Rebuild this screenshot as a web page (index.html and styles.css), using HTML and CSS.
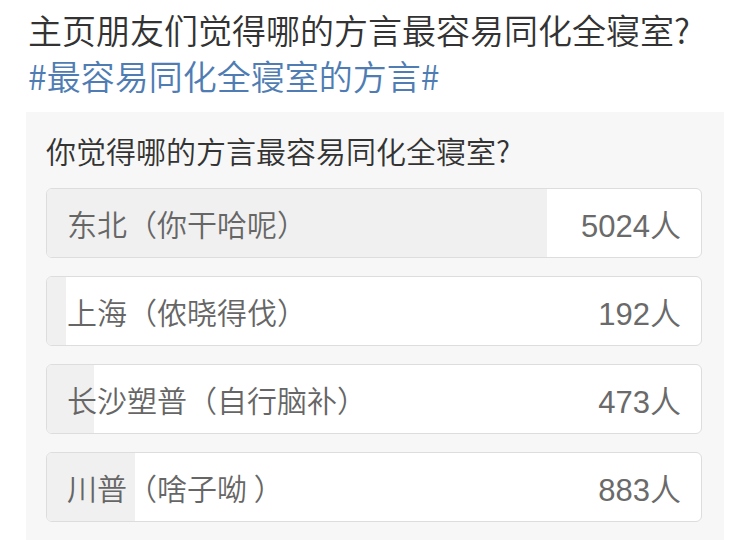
FILE: index.html
```html
<!DOCTYPE html>
<html lang="zh-CN">
<head>
  <meta charset="UTF-8" />
  <meta name="viewport" content="width=device-width, initial-scale=1.0" />
  <title>投票</title>
  <link rel="stylesheet" href="styles.css">
</head>
<body>
  <div class="post">
    <p class="post-text">主页朋友们觉得哪的方言最容易同化全寝室?<br><a class="topic" href="#">#最容易同化全寝室的方言#</a></p>

    <div class="vote-card">
      <div class="question">你觉得哪的方言最容易同化全寝室?</div>

      <div class="option">
        <div class="fill" style="width: 76.4%"></div>
        <span class="label">东北（你干哈呢）</span>
        <span class="count">5024人</span>
      </div>
      <div class="option">
        <div class="fill" style="width: 2.9%"></div>
        <span class="label">上海（侬晓得伐）</span>
        <span class="count">192人</span>
      </div>
      <div class="option">
        <div class="fill" style="width: 7.2%"></div>
        <span class="label">长沙塑普（自行脑补）</span>
        <span class="count">473人</span>
      </div>
      <div class="option">
        <div class="fill" style="width: 13.4%"></div>
        <span class="label">川普（啥子呦 ）</span>
        <span class="count">883人</span>
      </div>
    </div>
  </div>
</body>
</html>
```

FILE: styles.css
```css
body {
  margin: 0;
  background: #fff;
  font-family: "Noto Sans CJK SC", "Noto Sans", sans-serif;
  font-weight: 350;
}
.post {
  padding: 7px 6px 0 26px;
}
.post-text {
  margin: 0 0 13px 2px;
  font-size: 34px;
  line-height: 46px;
  color: #333;
}
.topic {
  color: #4f7db3;
  text-decoration: none;
}
.vote-card {
  background: #f7f7f7;
  padding: 18px 22px 18px 20px;
}
.question {
  font-size: 30px;
  line-height: 40px;
  color: #333;
  margin-bottom: 18px;
}
.option {
  position: relative;
  display: flex;
  justify-content: space-between;
  align-items: center;
  height: 68px;
  padding: 0 20px;
  margin-bottom: 18px;
  background: #fff;
  border: 1px solid #ddd;
  border-radius: 6px;
  overflow: hidden;
}
.option:last-child {
  margin-bottom: 0;
}
.fill {
  position: absolute;
  left: 0;
  top: 0;
  bottom: 0;
  background: #f0f0f0;
}
.label, .count {
  position: relative;
  color: #666;
}
.label {
  font-size: 30px;
}
.count {
  font-family: "Liberation Sans", "Noto Sans CJK SC", sans-serif;
  font-size: 31px;
  color: #6a6a6a;
}
```
